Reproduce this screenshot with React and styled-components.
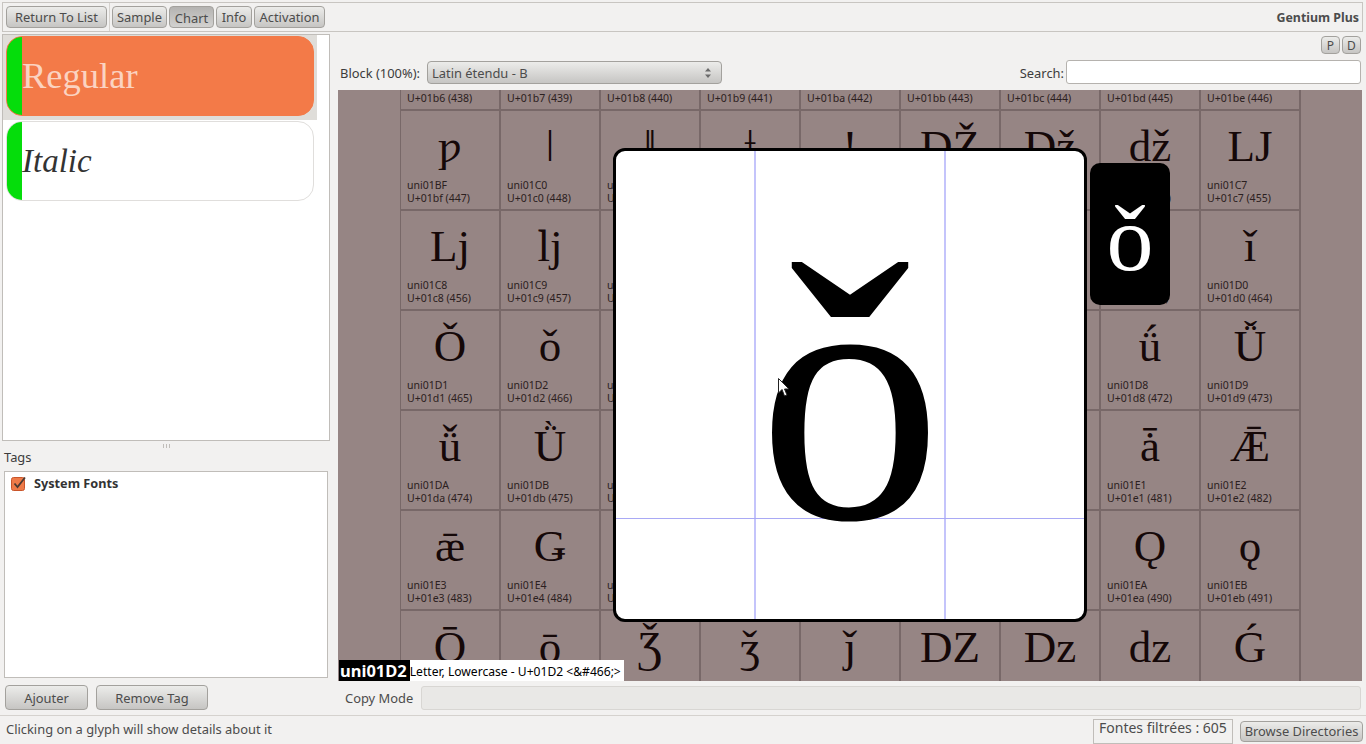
import styled, {createGlobalStyle} from "styled-components";

const GlobalStyle = createGlobalStyle`
  html, body {
    margin: 0;
    padding: 0;
    background: #f2f1f0;
    overflow: hidden;
  }
  * {
    box-sizing: border-box;
  }
`;

const UI_FONT = `"Noto Sans", "Open Sans", sans-serif`;
const GLYPH_FONT = `"Liberation Serif", "DejaVu Serif", serif`;

const ROW_STARTS = [0x1b6, 0x1bf, 0x1c8, 0x1d1, 0x1da, 0x1e3, 0x1ec];
const hex = (n) => n.toString(16).padStart(4, '0');

function Cell({code, part}) {
    const name = 'uni' + hex(code).toUpperCase();
    const label = 'U+' + hex(code) + ' (' + code + ')';
    if (part === 'top') return <GridCell><CellLabel>{label}</CellLabel></GridCell>;
    if (part === 'bottom') return <GridCell><CellGlyph $clip>{String.fromCodePoint(code)}</CellGlyph></GridCell>;
    return (
        <GridCell>
            <CellGlyph>{String.fromCodePoint(code)}</CellGlyph>
            <CellLabel>{name}</CellLabel>
            <CellLabel>{label}</CellLabel>
        </GridCell>
    );
}

function App() {
    const part = (i) => (i === 0 ? 'top' : i === ROW_STARTS.length - 1 ? 'bottom' : 'full');
    return (
        <Page>
            <GlobalStyle/>
            <Toolbar>
                <Button $w={101}>Return To List</Button>
                <ToolSep/>
                <Button $w={55}>Sample</Button>
                <Button $w={45} $active>Chart</Button>
                <Button $w={36}>Info</Button>
                <Button $w={71}>Activation</Button>
                <FontName>Gentium Plus</FontName>
            </Toolbar>
            <Main>
                <Side>
                    <FontList>
                        <FontRow $selected>
                            <FontCard $selected>
                                <GreenBar/>
                                <FontTitle $selected>Regular</FontTitle>
                            </FontCard>
                        </FontRow>
                        <FontRow>
                            <FontCard>
                                <GreenBar/>
                                <FontTitle $italic>Italic</FontTitle>
                            </FontCard>
                        </FontRow>
                    </FontList>
                    <Grip/>
                    <TagsLabel>Tags</TagsLabel>
                    <TagList>
                        <TagRow>
                            <svg width="15" height="15" viewBox="0 0 15 15">
                                <rect x="0.5" y="1.5" width="13" height="13" rx="2" fill="#ee7a48" stroke="#c9552a"/>
                                <path d="M3.5 7.5 L6.5 11 L14 1.5" fill="none" stroke="#4a3a32" strokeWidth="1.8"/>
                            </svg>
                            <TagName>System Fonts</TagName>
                        </TagRow>
                    </TagList>
                    <TagButtons>
                        <Button $w={83} $h={25}>Ajouter</Button>
                        <Button $w={112} $h={25}>Remove Tag</Button>
                    </TagButtons>
                </Side>
                <Content>
                    <SmallButtons>
                        <SmallButton>P</SmallButton>
                        <SmallButton>D</SmallButton>
                    </SmallButtons>
                    <FilterBar>
                        <FieldLabel>Block (100%):</FieldLabel>
                        <Combo>
                            Latin étendu - B
                            <svg width="8" height="14" viewBox="0 0 8 14">
                                <path d="M4 2 L7 5.5 H1 Z M4 12 L7 8.5 H1 Z" fill="#6a6a6a"/>
                            </svg>
                        </Combo>
                        <SearchLabel>Search:</SearchLabel>
                        <SearchInput/>
                    </FilterBar>
                    <Chart>
                        <Grid>
                            {ROW_STARTS.map((start, i) => (
                                Array.from({length: 9}, (_, j) => (
                                    <Cell key={start + j} code={start + j} part={part(i)}/>
                                ))
                            ))}
                        </Grid>
                        <Detail>
                            <GuideV $x={138}/>
                            <GuideV $x={328}/>
                            <GuideH $y={367}/>
                            <DetailGlyph>ǒ</DetailGlyph>
                            <Pointer width="12" height="20" viewBox="0 0 12 20">
                                <path d="M0.5 0.5 V15 L4 11.5 L6.5 18 L9 17 L6.5 11 H11 Z" fill="#fff" stroke="#222" strokeWidth="1"/>
                            </Pointer>
                        </Detail>
                        <Preview>ǒ</Preview>
                        <Caption>
                            <CaptionName>uni01D2</CaptionName>
                            <CaptionText>{'Letter, Lowercase - U+01D2 <&#466;>'}</CaptionText>
                        </Caption>
                    </Chart>
                    <CopyBar>
                        <CopyLabel>Copy Mode</CopyLabel>
                        <CopyField/>
                    </CopyBar>
                </Content>
            </Main>
            <StatusBar>
                <StatusText>Clicking on a glyph will show details about it</StatusText>
                <CountBox>Fontes filtrées : 605</CountBox>
                <Button $w={123} $h={21}>Browse Directories</Button>
            </StatusBar>
        </Page>
    );
}

const Page = styled.div`
  width: 1366px;
  height: 744px;
  display: flex;
  flex-direction: column;
  padding-top: 2px;
  font-family: ${UI_FONT};
  font-size: 12.9px;
  color: #3c3c3c;
  background: #f2f1f0;
  overflow: hidden;
`;
const Toolbar = styled.div`
  height: 30px;
  margin: 0 3px 0 2px;
  padding: 0 3px 0 3px;
  border: 1px solid #c8c5c1;
  display: flex;
  align-items: center;
  gap: 2px;
`;
const Button = styled.div`
  width: ${p => p.$w}px;
  height: ${p => p.$h || 22}px;
  flex: none;
  display: flex;
  align-items: center;
  justify-content: center;
  padding-top: ${p => (p.$active ? 2 : 0)}px;
  white-space: nowrap;
  border: 1px solid #a3a19d;
  border-radius: 4px;
  color: #4c4c4c;
  background: ${p => p.$active
    ? 'linear-gradient(#b4b3b1, #d2d1cf)'
    : 'linear-gradient(#ececea, #c6c5c3)'};
`;
const ToolSep = styled.div`
  width: 1px;
  height: 28px;
  background: #d5d2ce;
`;
const FontName = styled.div`
  margin-left: auto;
  font-weight: 700;
  font-size: 12.4px;
  color: #4c4c4c;
`;
const Main = styled.div`
  flex: 1;
  min-height: 0;
  display: flex;
`;
const Side = styled.div`
  width: 338px;
  flex: none;
  display: flex;
  flex-direction: column;
  padding: 2px 8px 0 2px;
`;
const FontList = styled.div`
  height: 407px;
  flex: none;
  background: #fff;
  border: 1px solid #c0bdb9;
  padding-right: 12px;
`;
const FontRow = styled.div`
  height: ${p => (p.$selected ? 85 : 81)}px;
  padding: 1px 3px 0 3px;
  background: ${p => (p.$selected ? '#dfddd9' : '#fff')};
`;
const FontCard = styled.div`
  height: 80px;
  display: flex;
  align-items: center;
  overflow: hidden;
  border-radius: 16px;
  border: 1px solid ${p => (p.$selected ? '#f37a48' : '#e0dedc')};
  background: ${p => (p.$selected ? '#f37a48' : '#fff')};
`;
const GreenBar = styled.div`
  width: 16px;
  align-self: stretch;
  margin: -1px 0 -1px -1px;
  flex: none;
  background: #05dd0b;
`;
const FontTitle = styled.div`
  margin-top: ${p => (p.$selected ? -2 : 0)}px;
  font-family: ${GLYPH_FONT};
  font-size: ${p => (p.$italic ? 33 : 36.5)}px;
  font-style: ${p => (p.$italic ? 'italic' : 'normal')};
  color: ${p => (p.$selected ? '#fbd3c1' : '#333')};
`;
const Grip = styled.div`
  height: 9px;
  flex: none;
  display: flex;
  justify-content: center;
  align-items: center;
  &::before {
    content: "";
    width: 7px;
    height: 4px;
    background: repeating-linear-gradient(90deg, #c0bdb9 0 1px, transparent 1px 3px);
  }
`;
const TagsLabel = styled.div`
  height: 21px;
  padding: 0 0 0 2px;
  line-height: 14px;
`;
const TagList = styled.div`
  height: 207px;
  flex: none;
  margin: 0 2px;
  background: #fff;
  border: 1px solid #c0bdb9;
  padding: 2px 6px;
`;
const TagRow = styled.div`
  display: flex;
  align-items: center;
  gap: 8px;
`;
const TagName = styled.div`
  font-weight: 700;
  font-size: 12.7px;
  color: #333;
`;
const TagButtons = styled.div`
  display: flex;
  gap: 8px;
  margin: 7px 0 0 3px;
`;
const Content = styled.div`
  flex: 1;
  min-width: 0;
  display: flex;
  flex-direction: column;
  padding-right: 4px;
`;
const SmallButtons = styled.div`
  height: 29px;
  flex: none;
  display: flex;
  justify-content: flex-end;
  align-items: flex-end;
  gap: 2px;
  padding: 0 1px 7px 0;
`;
const SmallButton = styled.div`
  width: 19px;
  height: 18px;
  display: flex;
  align-items: center;
  justify-content: center;
  font-size: 12px;
  border: 1px solid #a3a19d;
  border-radius: 4px;
  color: #4c4c4c;
  background: linear-gradient(#ececea, #c6c5c3);
`;
const FilterBar = styled.div`
  height: 29px;
  flex: none;
  display: flex;
  align-items: flex-start;
  padding: 0 1px 0 2px;
`;
const FieldLabel = styled.div`
  line-height: 25px;
  width: 87px;
  flex: none;
  white-space: nowrap;
`;
const Combo = styled.div`
  width: 295px;
  height: 23px;
  flex: none;
  display: flex;
  align-items: center;
  justify-content: space-between;
  padding: 0 9px 0 4px;
  border: 1px solid #a3a19d;
  border-radius: 4px;
  color: #4c4c4c;
  background: linear-gradient(#ececea, #c6c5c3);
`;
const SearchLabel = styled.div`
  margin-left: auto;
  margin-right: 2px;
  line-height: 25px;
`;
const SearchInput = styled.div`
  width: 295px;
  height: 24px;
  flex: none;
  margin-top: -1px;
  background: #fff;
  border: 1px solid #b5b2ae;
  border-radius: 3px;
`;
const Chart = styled.div`
  position: relative;
  height: 591px;
  flex: none;
  overflow: hidden;
  background: #968584;
  padding-left: 62px;
`;
const Grid = styled.div`
  display: grid;
  width: 901px;
  grid-template-columns: repeat(9, 100px);
  grid-template-rows: 21px repeat(5, 100px) 70px;
  border-left: 1px solid #786868;
`;
const GridCell = styled.div`
  display: flex;
  flex-direction: column;
  justify-content: flex-end;
  min-height: 0;
  overflow: hidden;
  padding: 0 0 4px 6px;
  border-right: 2px solid #786868;
  border-bottom: 2px solid #786868;
  &:nth-last-child(-n+9) {
    border-bottom: 0;
    padding: 0;
  }
`;
const CellGlyph = styled.div`
  flex: 1;
  display: flex;
  align-items: center;
  justify-content: center;
  margin-left: ${p => (p.$clip ? 0 : -6)}px;
  padding-top: 2px;
  font-family: ${GLYPH_FONT};
  font-size: 45px;
  line-height: 1;
  color: #150808;
  white-space: nowrap;
`;
const CellLabel = styled.div`
  font-size: 10.5px;
  line-height: 13px;
  color: #2b2020;
  white-space: nowrap;
`;
const Detail = styled.div`
  position: absolute;
  left: 275px;
  top: 58px;
  width: 474px;
  height: 474px;
  overflow: hidden;
  background: #fff;
  border: 3px solid #000;
  border-radius: 12px;
`;
const GuideV = styled.div`
  position: absolute;
  top: 0;
  bottom: 0;
  left: ${p => p.$x}px;
  width: 2px;
  background: #c4c4fb;
`;
const GuideH = styled.div`
  position: absolute;
  left: 0;
  right: 0;
  top: ${p => p.$y}px;
  height: 1px;
  background: #a9a9f5;
`;
const DetailGlyph = styled.div`
  position: absolute;
  left: 0;
  right: 0;
  top: 59px;
  text-align: center;
  font-family: ${GLYPH_FONT};
  font-size: 368px;
  line-height: 1;
  color: #000;
`;
const Pointer = styled.svg`
  position: absolute;
  left: 162px;
  top: 227px;
`;
const Preview = styled.div`
  position: absolute;
  left: 752px;
  top: 73px;
  width: 80px;
  height: 142px;
  display: flex;
  align-items: center;
  justify-content: center;
  padding-top: 8px;
  background: #000;
  border-radius: 10px;
  font-family: ${GLYPH_FONT};
  font-size: 94px;
  line-height: 1;
  color: #fff;
`;
const Caption = styled.div`
  position: absolute;
  left: 1px;
  bottom: 0;
  height: 21px;
  display: flex;
  align-items: stretch;
`;
const CaptionName = styled.div`
  padding: 0 3px 0 1px;
  background: #000;
  color: #fff;
  font-size: 16.5px;
  font-weight: 700;
  line-height: 21px;
`;
const CaptionText = styled.div`
  padding: 2px 3px 0 0;
  background: #fff;
  color: #000;
  font-size: 12.1px;
  line-height: 19px;
`;
const CopyBar = styled.div`
  flex: 1;
  display: flex;
  align-items: center;
  padding: 5px 1px 5px 7px;
`;
const CopyLabel = styled.div`
  width: 76px;
  flex: none;
  color: #4c4c4c;
`;
const CopyField = styled.div`
  flex: 1;
  height: 24px;
  background: #e9e8e6;
  border: 1px solid #d8d6d3;
  border-radius: 3px;
`;
const StatusBar = styled.div`
  height: 29px;
  flex: none;
  display: flex;
  align-items: center;
  padding: 2px 3px 0 6px;
  border-top: 1px solid #d5d2ce;
`;
const StatusText = styled.div`
  margin-right: auto;
  margin-top: -4px;
  color: #4c4c4c;
`;
const CountBox = styled.div`
  width: 140px;
  height: 25px;
  margin-right: 7px;
  padding-left: 5px;
  font-size: 14px;
  line-height: 15px;
  white-space: nowrap;
  border: 1px solid #c0bdb9;
  color: #4c4c4c;
`;

export default App;
